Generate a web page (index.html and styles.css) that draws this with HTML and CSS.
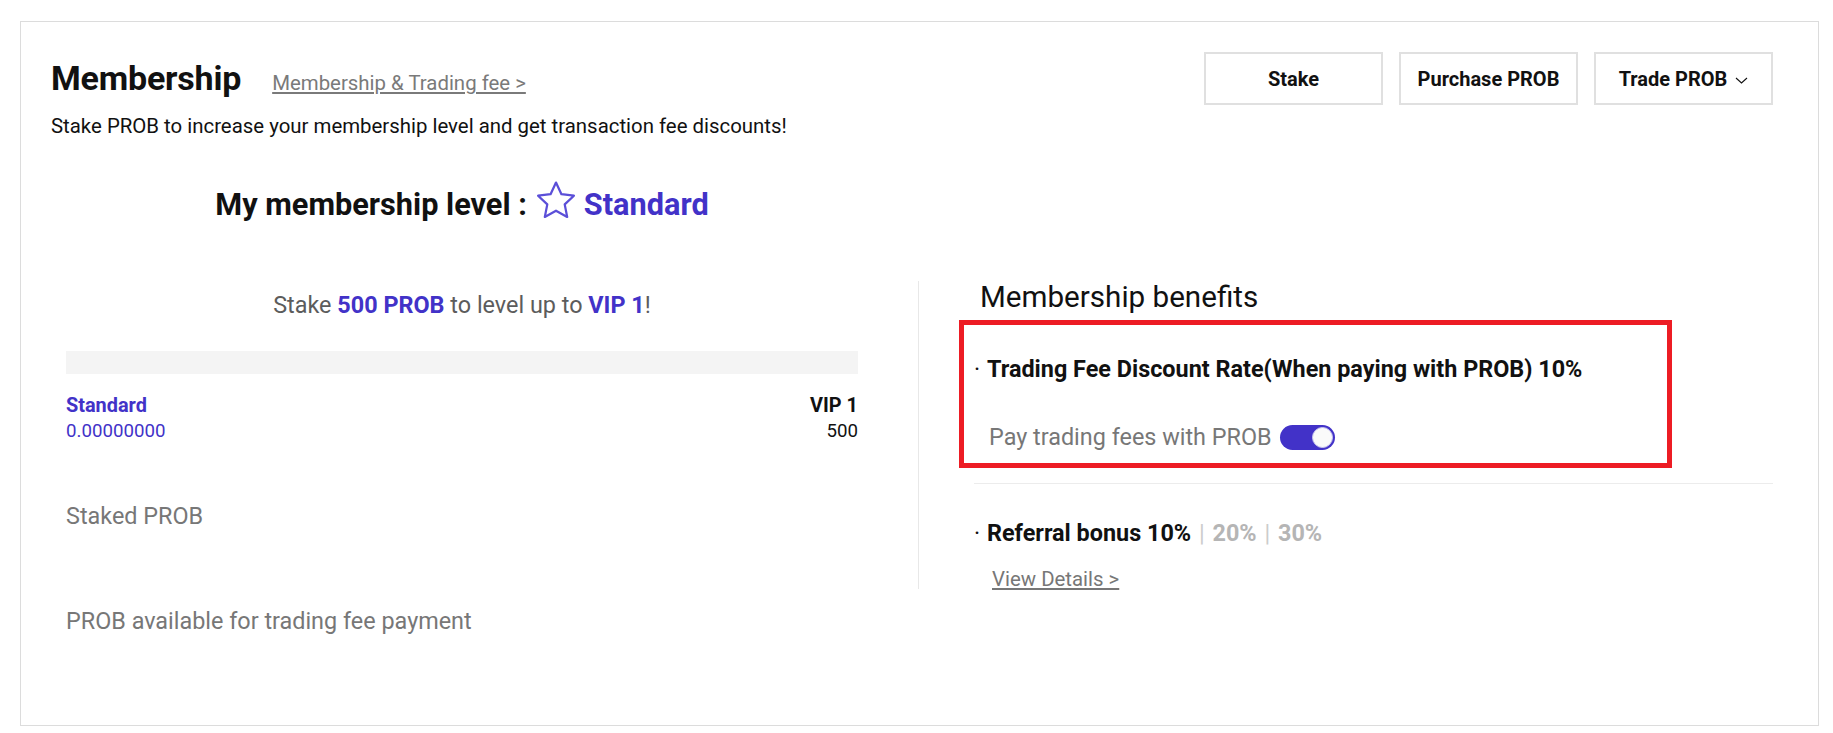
FILE: index.html
```html
<!DOCTYPE html>
<html lang="en">
<head>
  <meta charset="UTF-8" />
  <meta name="viewport" content="width=device-width, initial-scale=1" />
  <title>Membership</title>
  <link rel="stylesheet" href="styles.css">
</head>
<body>
  <div class="card">
    <div class="top">
      <div class="intro">
        <div class="title-row">
          <h1>Membership</h1>
          <a class="fee-link" href="#">Membership &amp; Trading fee &gt;</a>
        </div>
        <p class="subtitle">Stake PROB to increase your membership level and get transaction fee discounts!</p>
      </div>
      <div class="actions">
        <button class="btn">Stake</button>
        <button class="btn">Purchase PROB</button>
        <button class="btn">Trade PROB
          <svg class="chev" width="13" height="7" viewBox="0 0 13 7"><path d="M1 1l5.5 5 5.5-5" fill="none" stroke="#111" stroke-width="1.1"/></svg>
        </button>
      </div>
    </div>

    <div class="level">
      <span>My membership level :</span>
      <svg class="star" width="42" height="40" viewBox="0 0 41 39"><path d="M20.5 2.5l5.3 11.3 12.2 1.5-9 8.5 2.4 12.2-10.9-6-10.9 6 2.4-12.2-9-8.5 12.2-1.5z" fill="none" stroke="#5b4fd8" stroke-width="2.2" stroke-linejoin="round"/></svg>
      <span class="purple">Standard</span>
    </div>

    <div class="cols">
      <div class="left">
        <p class="goal">Stake <b>500 PROB</b> to level up to <b>VIP 1</b>!</p>
        <div class="bar"></div>
        <div class="steps">
          <div>
            <div class="step-name purple">Standard</div>
            <div class="step-val purple">0.00000000</div>
          </div>
          <div class="right-al">
            <div class="step-name">VIP 1</div>
            <div class="step-val">500</div>
          </div>
        </div>
        <p class="stat">Staked PROB</p>
        <p class="stat stat-2">PROB available for trading fee payment</p>
      </div>

      <div class="benefits">
        <h3>Membership benefits</h3>
        <div class="perk">
          <span class="dot">·</span><b>Trading Fee Discount Rate(When paying with PROB) 10%</b>
        </div>
        <div class="pay-row">
          <span>Pay trading fees with PROB</span>
          <span class="toggle"><span class="knob"></span></span>
        </div>
        <hr class="sep" />
        <div class="perk perk-big">
          <span class="dot">·</span><b>Referral bonus 10%</b>
          <span class="pipe">|</span> <b class="off">20%</b>
          <span class="pipe">|</span> <b class="off">30%</b>
        </div>
        <a class="details" href="#">View Details &gt;</a>

        <div class="highlight"></div>
      </div>
    </div>
  </div>
</body>
</html>
```

FILE: styles.css
```css
body {
  margin: 0;
  font-family: Roboto, 'Liberation Sans', sans-serif;
  color: #111;
  background: #fff;
}
p {
  margin: 0;
}
.purple {
  color: #4232c8;
}
.card {
  margin: 21px 14px 0 20px;
  height: 705px;
  box-sizing: border-box;
  border: 1px solid #dcdcdc;
  padding: 0 45px 0 30px;
}

/* header */
.top {
  display: flex;
  justify-content: space-between;
  align-items: flex-start;
  padding-top: 30px;
}
.intro {
  padding-top: 6px;
}
.title-row {
  display: flex;
  align-items: baseline;
  gap: 31px;
}
.title-row h1 {
  margin: 0;
  font-size: 34px;
  line-height: 40px;
  font-weight: 700;
  letter-spacing: -0.2px;
}
.fee-link {
  color: #7a7a7a;
  font-size: 20.4px;
  text-decoration: underline;
}
.subtitle {
  margin-top: 16px;
  font-size: 20.4px;
  line-height: 24px;
}
.actions {
  display: flex;
  gap: 16px;
}
.btn {
  width: 179px;
  height: 53px;
  background: #fff;
  border: 2px solid #e0e0e0;
  font-family: inherit;
  font-size: 20px;
  font-weight: 700;
  color: #111;
  display: flex;
  align-items: center;
  justify-content: center;
  gap: 8px;
}
.chev {
  margin-top: 3px;
}

/* level */
.level {
  width: 792px;
  margin: 49px 0 0 15px;
  display: flex;
  justify-content: center;
  align-items: center;
  gap: 7px;
  font-size: 30.7px;
  line-height: 36px;
  font-weight: 700;
}
.star {
  margin: -10px 0 0 1px;
}

/* columns */
.cols {
  display: flex;
  margin-top: 58px;
}
.left {
  width: 792px;
  padding: 10px 60px 0 15px;
}
.goal {
  text-align: center;
  font-size: 23.4px;
  line-height: 28px;
  color: #5c5c5c;
}
.goal b {
  color: #4232c8;
}
.bar {
  margin-top: 32px;
  height: 23px;
  background: #f4f4f4;
}
.steps {
  display: flex;
  justify-content: space-between;
  margin-top: 20px;
}
.right-al {
  text-align: right;
}
.step-name {
  font-size: 19.9px;
  line-height: 24px;
  font-weight: 700;
}
.step-val {
  font-size: 18.7px;
  line-height: 26px;
}
.stat {
  margin-top: 58px;
  font-size: 23.4px;
  line-height: 28px;
  color: #777;
}
.stat-2 {
  margin-top: 77px;
}

/* benefits */
.benefits {
  position: relative;
  flex: 1;
  height: 308px;
  border-left: 1px solid #e8e8e8;
  padding-left: 55px;
}
.benefits h3 {
  margin: 0 0 0 6px;
  font-size: 29.6px;
  line-height: 33px;
  font-weight: 400;
}
.perk {
  margin-top: 41px;
  font-size: 23.4px;
  line-height: 28px;
}
.dot {
  display: inline-block;
  width: 13px;
  font-weight: 400;
}
.pay-row {
  margin: 40px 0 0 15px;
  display: flex;
  align-items: center;
  gap: 8px;
  font-size: 23.4px;
  line-height: 28px;
  color: #777;
}
.toggle {
  width: 55px;
  height: 25px;
  border-radius: 13px;
  background: #4232c8;
  display: flex;
  justify-content: flex-end;
  align-items: center;
  padding-right: 2px;
  box-sizing: border-box;
}
.knob {
  width: 21px;
  height: 21px;
  border-radius: 50%;
  background: #fafafa;
  border: 1px solid #c9c6ee;
  box-sizing: border-box;
}
.sep {
  margin: 32px 0 0;
  border: 0;
  border-top: 1px solid #ececec;
}
.perk-big {
  margin-top: 35px;
}
.pipe {
  color: #ccc;
  font-weight: 400;
  margin: 0 2px;
}
.off {
  color: #b5b5b5;
}
.details {
  display: inline-block;
  margin: 20px 0 0 18px;
  font-size: 20.4px;
  line-height: 24px;
  color: #777;
}

/* red marker frame drawn over the first perk */
.highlight {
  position: absolute;
  left: 40px;
  top: 39px;
  width: 713px;
  height: 148px;
  border: 5px solid #ed1c24;
  box-sizing: border-box;
}
```
